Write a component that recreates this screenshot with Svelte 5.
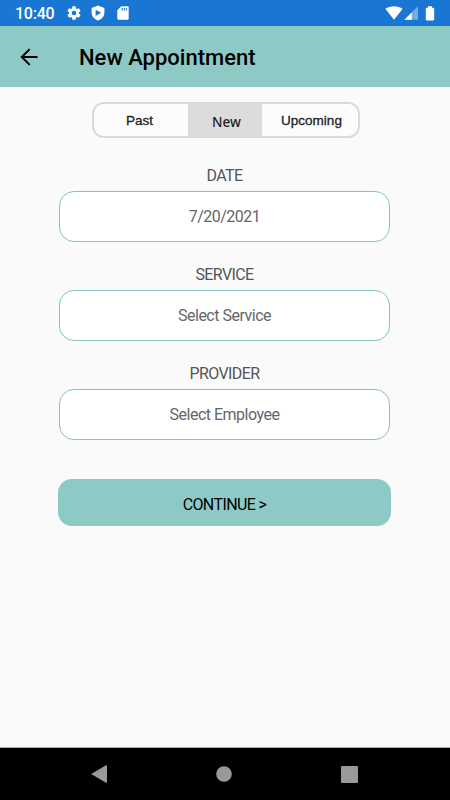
<script>
  const tabs = ['Past', 'New', 'Upcoming'];
  let active = $state('New');
  const fields = [
    { label: 'DATE', value: '7/20/2021' },
    { label: 'SERVICE', value: 'Select Service' },
    { label: 'PROVIDER', value: 'Select Employee' }
  ];
</script>

<div class="screen">
  <div class="status">
    <span class="clock">10:40</span>
    <svg class="gear" width="16" height="16" viewBox="0 0 24 24" fill="#fff">
      <path d="M19.43 12.98c.04-.32.07-.64.07-.98s-.03-.66-.07-.98l2.11-1.65c.19-.15.24-.42.12-.64l-2-3.46c-.12-.22-.39-.3-.61-.22l-2.49 1c-.52-.4-1.08-.73-1.69-.98l-.38-2.65A.49.49 0 0 0 14 2h-4c-.25 0-.46.18-.49.42l-.38 2.65c-.61.25-1.17.59-1.69.98l-2.49-1c-.23-.09-.49 0-.61.22l-2 3.46c-.13.22-.07.49.12.64l2.11 1.65c-.04.32-.07.65-.07.98s.03.66.07.98l-2.11 1.65c-.19.15-.24.42-.12.64l2 3.46c.12.22.39.3.61.22l2.49-1c.52.4 1.08.73 1.69.98l.38 2.65c.03.24.24.42.49.42h4c.25 0 .46-.18.49-.42l.38-2.65c.61-.25 1.17-.59 1.69-.98l2.49 1c.23.09.49 0 .61-.22l2-3.46c.12-.22.07-.49-.12-.64zM12 15.5a3.5 3.5 0 1 1 0-7 3.5 3.5 0 0 1 0 7z" />
    </svg>
    <svg class="shield" width="14" height="16" viewBox="0 0 14 16">
      <path fill="#fff" d="M7 .5 13.4 3v4.7c0 3.5-2.7 6.5-6.4 7.8C3.3 14.2.6 11.2.6 7.7V3z" />
      <path fill="#1976d2" d="M4.6 4.7v6.2L10.2 7.8z" />
    </svg>
    <svg class="sd" width="12" height="14" viewBox="0 0 12 14">
      <path fill="#fff" d="M4.3.3h6.2c.7 0 1.2.5 1.2 1.2v11c0 .7-.5 1.2-1.2 1.2h-9c-.7 0-1.2-.5-1.2-1.2V4.3z" />
      <path stroke="#1976d2" stroke-width="1.1" d="M5.2 2v2.600M7.300 2v2.600M9.400 2v2.600" />
    </svg>
    <span class="grow"></span>
    <svg width="18" height="14" viewBox="0 0 18 14">
      <path fill="#fff" d="M.3 2.800C5.300-.6 12.700-.6 17.700 2.800L9 13.800z" />
    </svg>
    <svg class="signal" width="14" height="14" viewBox="0 0 14 14">
      <path fill="#fff" fill-opacity=".4" d="M14 .3v13.400H.4z" />
      <path fill="#fff" d="M7.800 6.400v7.300H.4z" />
    </svg>
    <svg class="battery" width="10" height="15" viewBox="0 0 10 15">
      <path fill="#fff" d="M3 .3h4v1.500h1.400c.5 0 .8.300.8.800v11c0 .5-.3.800-.8.800H1.600c-.5 0-.8-.3-.8-.8v-11c0-.5.3-.8.8-.8H3z" />
    </svg>
  </div>

  <header>
    <svg width="18" height="18" viewBox="0 0 18 18" fill="none" stroke="#000" stroke-width="2">
      <path d="M17.500 9H2M9.700 1.100 1.800 9l7.900 7.900" />
    </svg>
    <h1>New Appointment</h1>
  </header>

  <main>
    <div class="tabs">
      {#each tabs as tab}
        <button class="tab {tab.toLowerCase()}" class:active={active === tab} onclick={() => (active = tab)}>{tab}</button>
      {/each}
    </div>

    {#each fields as field}
      <section>
        <div class="label">{field.label}</div>
        <div class="field">{field.value}</div>
      </section>
    {/each}

    <button class="continue">CONTINUE &gt;</button>
  </main>

  <nav>
    <svg width="16" height="18" viewBox="0 0 16 18"><path fill="#999" d="M.2 9 15 .2Q16 0 16 1v16q0 1-1 .8z" /></svg>
    <svg width="16" height="16" viewBox="0 0 16 16"><circle cx="8" cy="8" r="7.800" fill="#999" /></svg>
    <svg width="17" height="17" viewBox="0 0 17 17"><rect width="17" height="17" rx="1.200" fill="#999" /></svg>
  </nav>
</div>

<style>
  :global(body) {
    margin: 0;
  }
  .screen {
    width: 450px;
    height: 800px;
    display: flex;
    flex-direction: column;
    background: #fafafa;
    font-family: Roboto, sans-serif;
    overflow: hidden;
  }
  svg {
    display: block;
    flex: none;
  }
  .status {
    height: 26px;
    box-sizing: border-box;
    display: flex;
    align-items: center;
    padding: 0 15px;
    background: #1976d2;
    color: #fff;
  }
  .clock {
    width: 51px;
    font-size: 16px;
    letter-spacing: -0.25px;
    font-weight: 500;
    line-height: 26px;
    padding-top: 2px;
  }
  .shield {
    margin-left: 9px;
  }
  .sd {
    margin-left: 12px;
  }
  .grow {
    flex: 1;
  }
  .signal {
    margin-left: 1px;
  }
  .battery {
    margin-left: 7px;
  }
  header {
    height: 61px;
    display: flex;
    align-items: center;
    padding-left: 20px;
    background: #8ecac5;
  }
  h1 {
    margin: 2px 0 0 41px;
    font-size: 22px;
    font-weight: 500;
    line-height: 28px;
    color: #000;
  }
  main {
    flex: 1;
    display: flex;
    flex-direction: column;
    align-items: center;
    padding-right: 1px;
  }
  button {
    font-family: inherit;
    border: 0;
    padding: 0;
    color: #000;
  }
  .tabs {
    width: 268px;
    height: 36px;
    box-sizing: border-box;
    margin: 15px 0 24px 2px;
    display: flex;
    border: 2px solid #d9d9d9;
    border-radius: 12px;
    overflow: hidden;
  }
  .tab {
    width: 94px;
    background: #fcfcfc;
    color: #222;
    font: 500 13.500px/34px 'Liberation Sans', Arial, sans-serif;
    -webkit-text-stroke: 0.3px #222;
    padding-right: 2px;
  }
  .tab.new {
    width: 74px;
    font: 500 13.500px/34px 'Noto Sans', sans-serif;
    -webkit-text-stroke: 0;
    padding: 1px 0 0 4px;
  }
  .tab.upcoming {
    flex: 1;
    padding: 0 0 2px 4px;
  }
  .tab.active {
    background: #dcdcdc;
  }
  section {
    height: 99.200px;
    display: flex;
    flex-direction: column;
    align-items: center;
  }
  .label {
    height: 29px;
    line-height: 28px;
    font-size: 16px;
    letter-spacing: -0.6px;
    color: #555;
  }
  .field {
    width: 331px;
    height: 50.500px;
    box-sizing: border-box;
    border: 1.500px solid #80c5be;
    border-radius: 15px;
    background: #fff;
    font-size: 16px;
    letter-spacing: -0.5px;
    line-height: 49px;
    text-align: center;
    color: #666;
  }
  .continue {
    width: 333px;
    height: 47px;
    margin-top: 19px;
    border-radius: 14px;
    background: #8ecac5;
    font-size: 16px;
    letter-spacing: -0.6px;
    line-height: 47px;
    padding-top: 2px;
  }
  nav {
    height: 52px;
    border-top: 1px solid #aaa;
    margin-top: -1px;
    display: flex;
    align-items: center;
    justify-content: space-between;
    padding: 0 92.500px 0 91px;
    background: #000;
  }
</style>
